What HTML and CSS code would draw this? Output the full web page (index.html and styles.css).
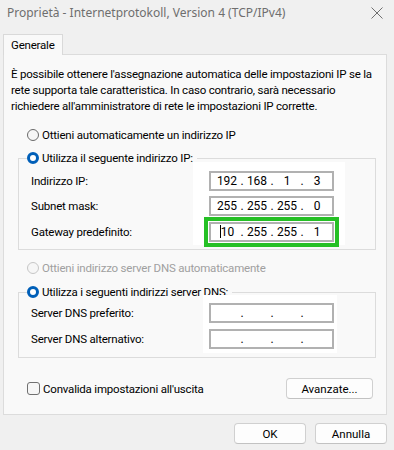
FILE: index.html
```html
<!DOCTYPE html>
<html lang="it">
<head>
    <meta charset="UTF-8">
    <title>Proprietà - Internetprotokoll, Version 4 (TCP/IPv4)</title>
    <link rel="stylesheet" href="styles.css">
</head>
<body>
    <!-- barra del titolo -->
    <div class="titlebar">
        <span class="title">Proprietà - Internetprotokoll, Version 4 (TCP/IPv4)</span>
        <svg class="close" width="12" height="12" viewBox="0 0 12 12">
            <path d="M0.5 0.5 L11.5 11.5 M11.5 0.5 L0.5 11.5" stroke="#6f6f6f" stroke-width="1" fill="none"/>
        </svg>
    </div>

    <div class="tabs">
        <div class="tab">Generale</div>
    </div>

    <div class="panel">
        <p class="intro">È possibile ottenere l'assegnazione automatica delle impostazioni IP se la<br>rete supporta tale caratteristica. In caso contrario, sarà necessario<br>richiedere all'amministratore di rete le impostazioni IP corrette.</p>

        <div class="option first"><span class="radio"></span>Ottieni automaticamente un indirizzo IP</div>

        <fieldset class="group">
            <legend class="option"><span class="radio checked"></span>Utilizza il seguente indirizzo IP:</legend>
            <div class="rows ip-rows">
                <div class="labels">
                    <span>Indirizzo IP:</span>
                    <span>Subnet mask:</span>
                    <span class="gw">Gateway predefinito:</span>
                </div>
                <div class="fields">
                    <div class="ipbox"><span class="oct">192</span><span class="dot">.</span><span class="oct">168</span><span class="dot">.</span><span class="oct">1</span><span class="dot">.</span><span class="oct">3</span></div>
                    <div class="ipbox"><span class="oct">255</span><span class="dot">.</span><span class="oct">255</span><span class="dot">.</span><span class="oct">255</span><span class="dot">.</span><span class="oct">0</span></div>
                    <div class="ipbox gw highlight"><span class="oct"><span class="caret"></span>10</span><span class="dot">.</span><span class="oct">255</span><span class="dot">.</span><span class="oct">255</span><span class="dot">.</span><span class="oct">1</span></div>
                </div>
            </div>
        </fieldset>

        <div class="option disabled"><span class="radio"></span>Ottieni indirizzo server DNS automaticamente</div>

        <fieldset class="group">
            <legend class="option"><span class="radio checked"></span>Utilizza i seguenti indirizzi server DNS:</legend>
            <div class="rows dns-rows">
                <div class="labels">
                    <span>Server DNS preferito:</span>
                    <span>Server DNS alternativo:</span>
                </div>
                <div class="fields">
                    <div class="ipbox"><span class="oct"></span><span class="dot">.</span><span class="oct"></span><span class="dot">.</span><span class="oct"></span><span class="dot">.</span><span class="oct"></span></div>
                    <div class="ipbox"><span class="oct"></span><span class="dot">.</span><span class="oct"></span><span class="dot">.</span><span class="oct"></span><span class="dot">.</span><span class="oct"></span></div>
                </div>
            </div>
        </fieldset>

        <div class="bottom-row">
            <div class="option"><span class="checkbox"></span>Convalida impostazioni all'uscita</div>
            <button class="btn advanced">Avanzate...</button>
        </div>
    </div>

    <div class="footer">
        <button class="btn">OK</button>
        <button class="btn">Annulla</button>
    </div>
</body>
</html>
```

FILE: styles.css
```css
/* finestra base */
body {
    margin: 0;
    background: #f0f0f0;
    font-family: Roboto, "Noto Sans", sans-serif;
    font-size: 11.5px;
    letter-spacing: -0.2px;
    color: #000;
}

.titlebar {
    height: 25px;
    display: flex;
    align-items: center;
    justify-content: space-between;
    padding: 0 11px 0 7px;
}

.title {
    color: #6e6e6e;
    font-family: "Noto Sans", sans-serif;
    font-size: 12px;
    letter-spacing: 0;
}

.close {
    display: block;
}

.tabs {
    padding: 9px 0 0 3px;
    display: flex;
}

.tab {
    background: #f9f9f9;
    border: 1px solid #d9d9d9;
    border-bottom: none;
    padding: 0 7px;
    line-height: 20px;
    margin-bottom: -1px;
    position: relative;
}

.panel {
    margin: 0 7px 0 3px;
    background: #f9f9f9;
    border: 1px solid #dcdcdc;
    padding: 11px 0 15px;
}

.intro {
    margin: 0 0 13px 7px;
    line-height: 16px;
    white-space: nowrap;
}

/* radio / checkbox con testo */
.option {
    display: flex;
    align-items: center;
    line-height: 16px;
    padding-left: 23px;
}

.option.disabled {
    color: #a0a0a0;
    margin-top: 10px;
}

.radio {
    width: 12px;
    height: 12px;
    box-sizing: border-box;
    border: 1px solid #6a6a6a;
    border-radius: 50%;
    margin-right: 3px;
    background: #f6f6f6;
}

.disabled .radio {
    border-color: #c6c6c6;
}

.radio.checked {
    border: 3.5px solid #005fb8;
    background: #fff;
}

.checkbox {
    width: 13px;
    height: 13px;
    box-sizing: border-box;
    border: 1px solid #707070;
    border-radius: 3px;
    margin-right: 3px;
    background: #f6f6f6;
}

/* riquadri di gruppo */
.group {
    margin: 7px 10px 0 14px;
    padding: 0 0 4px 12px;
    border: 1px solid #dcdcdc;
    min-width: 0;
}

.option.disabled + .group {
    margin-top: 8px;
}

.group legend {
    padding: 0 4px 0 0;
    margin-left: -4px;
}

.rows {
    display: flex;
    margin-top: -4px;
}

.labels {
    display: flex;
    flex-direction: column;
    gap: 5px;
}

.labels span {
    line-height: 20px;
}

.fields {
    display: flex;
    flex-direction: column;
    gap: 5px;
    background: #fff;
}

.ip-rows .labels {
    width: 162px;
    padding-top: 9px;
}

.ip-rows .fields {
    padding: 9px 11px 3px 16px;
}

.ip-rows .gw {
    margin-top: 1px;
}

.dns-rows {
    margin-top: -5px;
}

.dns-rows .labels {
    width: 172px;
    padding-top: 8px;
    gap: 6px;
}

.dns-rows .fields {
    padding: 8px 3px 4px 6px;
    gap: 6px;
}

.ipbox {
    width: 125px;
    height: 20px;
    box-sizing: border-box;
    border: 2px solid #b1b1b1;
    background: #fff;
    display: flex;
    align-items: center;
    padding-left: 4px;
    line-height: 16px;
    font-size: 12px;
    letter-spacing: 0;
}

.oct {
    width: 24px;
    text-align: center;
}

.dot {
    width: 6px;
    text-align: center;
}

.highlight {
    outline: 4px solid #25c025;
    outline-offset: 1px;
}

.caret {
    display: inline-block;
    width: 1px;
    height: 13px;
    background: #000;
    vertical-align: -2px;
}

/* riga in basso */
.bottom-row {
    display: flex;
    align-items: center;
    justify-content: space-between;
    margin-top: 20px;
    padding-right: 13px;
}

.btn {
    font-family: Roboto, "Noto Sans", sans-serif;
    font-size: 11.5px;
    color: #000;
    height: 21px;
    width: 72px;
    padding: 0;
    background: #fdfdfd;
    border: 1px solid #d0d0d0;
    border-bottom-color: #c2c2c2;
    border-radius: 4px;
}

.btn.advanced {
    width: 87px;
}

.footer {
    display: flex;
    justify-content: flex-end;
    gap: 9px;
    margin-top: 8px;
    padding-right: 7px;
}
```
